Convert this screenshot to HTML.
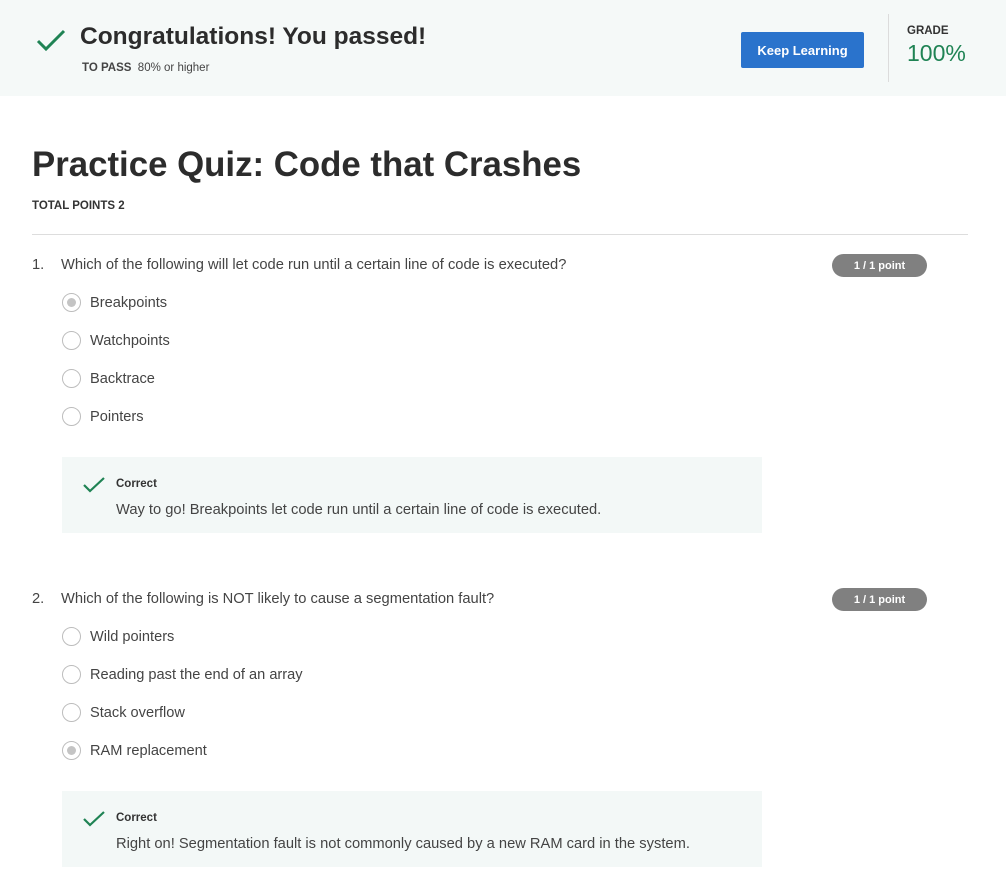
<!DOCTYPE html>
<html><head><meta charset="utf-8"><style>
*{margin:0;padding:0;box-sizing:border-box}
body{width:1006px;height:879px;background:#fff;font-family:"Liberation Sans",sans-serif;color:#373a3c;position:relative;overflow:hidden}
.abs{position:absolute;white-space:nowrap}
.hdr{position:absolute;left:0;top:0;width:1006px;height:96px;background:#f5f9f8}
.radio{position:absolute;width:19px;height:19px;border:1.5px solid #bdbdbd;border-radius:50%;background:#fff}
.radio.on::after{content:"";position:absolute;left:3.5px;top:3.5px;width:9px;height:9px;border-radius:50%;background:#c4c4c4}
.opt{position:absolute;font-size:14.6px;color:#444;white-space:nowrap}
.q{font-size:14.7px;color:#444}
.badge{position:absolute;left:832px;width:95px;height:23px;border-radius:12px;background:#808080;color:#fff;font-size:11px;font-weight:bold;text-align:center;line-height:24px}
.fb{position:absolute;left:62px;width:700px;height:76px;background:#f3f8f7}
</style></head><body>
<div class="hdr"></div>
<svg class="abs" style="left:36px;top:29px" width="30" height="22" viewBox="0 0 30 22"><path d="M2 12 L10 20 L28 2" fill="none" stroke="#1f8354" stroke-width="3"/></svg>
<div class="abs" style="left:80px;top:23px;font-size:24.5px;font-weight:bold;color:#2c2c2c">Congratulations! You passed!</div>
<div class="abs" style="left:82px;top:62px;font-size:11.5px;color:#444"><b>TO PASS</b>&nbsp; 80% or higher</div>
<div class="abs" style="left:741px;top:32px;width:123px;height:36px;background:#2a73cc;border-radius:2px;color:#fff;font-size:13px;font-weight:bold;text-align:center;line-height:37px">Keep Learning</div>
<div class="abs" style="left:888px;top:14px;width:1px;height:68px;background:#dcdcdc"></div>
<div class="abs" style="left:907px;top:25px;font-size:11.5px;font-weight:bold;color:#333">GRADE</div>
<div class="abs" style="left:907px;top:40px;font-size:23px;color:#1f8354">100%</div>

<div class="abs" style="left:32px;top:145px;font-size:34.8px;font-weight:bold;color:#2c2c2c">Practice Quiz: Code that Crashes</div>
<div class="abs" style="left:32px;top:200px;font-size:11.5px;font-weight:bold;color:#333">TOTAL POINTS 2</div>
<div class="abs" style="left:32px;top:234px;width:936px;height:1px;background:#ddd"></div>

<div class="abs q" style="left:32px;top:257px">1.</div>
<div class="abs q" style="left:61px;top:257px">Which of the following will let code run until a certain line of code is executed?</div>
<div class="badge" style="top:254px">1 / 1 point</div>
<div class="radio on" style="left:62px;top:293px"></div><div class="opt" style="left:90px;top:295px">Breakpoints</div>
<div class="radio" style="left:62px;top:331px"></div><div class="opt" style="left:90px;top:333px">Watchpoints</div>
<div class="radio" style="left:62px;top:369px"></div><div class="opt" style="left:90px;top:371px">Backtrace</div>
<div class="radio" style="left:62px;top:407px"></div><div class="opt" style="left:90px;top:409px">Pointers</div>
<div class="fb" style="top:457px"></div>
<svg class="abs" style="left:83px;top:477px" width="22" height="16" viewBox="0 0 22 16"><path d="M1 8 L7 14 L21 1" fill="none" stroke="#1f8354" stroke-width="2.2"/></svg>
<div class="abs" style="left:116px;top:478px;font-size:11.5px;font-weight:bold;color:#333">Correct</div>
<div class="abs q" style="left:116px;top:502px">Way to go! Breakpoints let code run until a certain line of code is executed.</div>

<div class="abs q" style="left:32px;top:591px">2.</div>
<div class="abs q" style="left:61px;top:591px">Which of the following is NOT likely to cause a segmentation fault?</div>
<div class="badge" style="top:588px">1 / 1 point</div>
<div class="radio" style="left:62px;top:627px"></div><div class="opt" style="left:90px;top:629px">Wild pointers</div>
<div class="radio" style="left:62px;top:665px"></div><div class="opt" style="left:90px;top:667px">Reading past the end of an array</div>
<div class="radio" style="left:62px;top:703px"></div><div class="opt" style="left:90px;top:705px">Stack overflow</div>
<div class="radio on" style="left:62px;top:741px"></div><div class="opt" style="left:90px;top:743px">RAM replacement</div>
<div class="fb" style="top:791px"></div>
<svg class="abs" style="left:83px;top:811px" width="22" height="16" viewBox="0 0 22 16"><path d="M1 8 L7 14 L21 1" fill="none" stroke="#1f8354" stroke-width="2.2"/></svg>
<div class="abs" style="left:116px;top:812px;font-size:11.5px;font-weight:bold;color:#333">Correct</div>
<div class="abs q" style="left:116px;top:836px">Right on! Segmentation fault is not commonly caused by a new RAM card in the system.</div>
</body></html>
